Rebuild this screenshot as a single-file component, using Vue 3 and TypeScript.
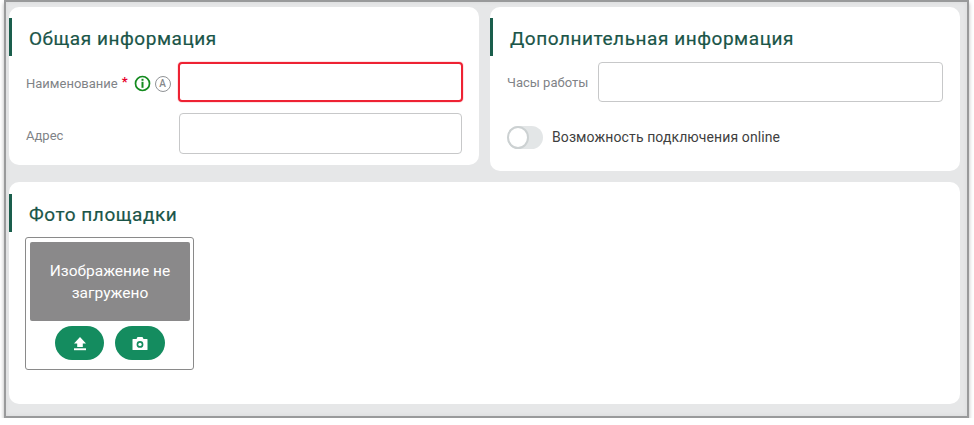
<script setup lang="ts">
</script>

<template>
  <div class="frame">
    <div class="top">
      <section class="card left">
        <h2 class="title">Общая информация</h2>
        <div class="row first">
          <div class="label wide">
            <span>Наименование</span><span class="req">*</span>
            <svg class="ic info" width="17" height="17" viewBox="0 0 17 17">
              <circle cx="8.5" cy="8.5" r="7" fill="none" stroke="#138a1e" stroke-width="1.7" />
              <rect x="7.5" y="3.8" width="2" height="2" fill="#138a1e" />
              <rect x="7.5" y="6.8" width="2" height="6" fill="#138a1e" />
            </svg>
            <span class="auto">A</span>
          </div>
          <div class="input error"></div>
        </div>
        <div class="row second">
          <div class="label wide">Адрес</div>
          <div class="input tall"></div>
        </div>
      </section>
      <section class="card right">
        <h2 class="title">Дополнительная информация</h2>
        <div class="row hours">
          <div class="label">Часы работы</div>
          <div class="input"></div>
        </div>
        <div class="switch-row">
          <span class="track"><span class="knob"></span></span>
          <span class="switch-label">Возможность подключения online</span>
        </div>
      </section>
    </div>
    <section class="card bottom">
      <h2 class="title">Фото площадки</h2>
      <div class="photo">
        <div class="placeholder">Изображение не загружено</div>
        <div class="buttons">
          <button class="btn up" type="button" aria-label="Загрузить">
            <svg width="14" height="15" viewBox="0 0 14 15">
              <path d="M7 1 L13 7.5 H9.8 V11 H4.2 V7.5 H1 Z" fill="#fff" />
              <rect x="1" y="12.3" width="12" height="1.9" fill="#fff" />
            </svg>
          </button>
          <button class="btn cam" type="button" aria-label="Камера">
            <svg width="16" height="15" viewBox="0 0 16 15">
              <path fill="#fff" fill-rule="evenodd" d="M1 3 H4.5 L5.5 1 H10.5 L11.5 3 H15 Q15.5 3 15.5 3.5 V13.5 Q15.5 14 15 14 H1 Q0.5 14 0.5 13.5 V3.5 Q0.5 3 1 3 Z M8 5 A3.4 3.4 0 1 0 8 11.8 A3.4 3.4 0 1 0 8 5 Z" />
              <circle cx="8" cy="8.4" r="1.7" fill="#fff" />
            </svg>
          </button>
        </div>
      </div>
    </section>
  </div>
</template>

<style>
html, body { background: #fff; }
</style>

<style scoped>
.frame {
  box-sizing: border-box;
  width: 965px;
  height: 418px;
  margin-left: 4px;
  border: 2px solid #999a9b;
  background: #e6e7e8;
  padding: 5px 7px 0 3px;
  box-shadow: 0 3px 4px rgba(0, 0, 0, 0.3), inset 0 0 5px rgba(0, 0, 0, 0.06);
  font-family: Roboto, "Liberation Sans", sans-serif;
}
.top {
  display: grid;
  grid-template-columns: 470px 470px;
  column-gap: 11px;
  align-items: start;
}
.card {
  background: #fff;
  border-radius: 10px;
  box-sizing: border-box;
  padding-top: 11px;
}
.left { height: 158px; }
.right { height: 164px; }
.bottom { height: 222px; margin-top: 11px; padding-top: 12px; }
.title {
  margin: 0;
  height: 38px;
  border-left: 3px solid #1a5e4c;
  padding-left: 17px;
  font-size: 19px;
  font-weight: 400;
  line-height: 41px;
  letter-spacing: 0.55px;
  color: #1a5548;
  -webkit-text-stroke: 0.2px #1a5548;
}
.row { display: flex; align-items: center; }
.first { margin-top: 6px; padding-left: 17px; }
.second { margin-top: 11px; padding-left: 17px; }
.hours { margin-top: 6px; padding-left: 17px; }
.label {
  font-size: 13px;
  color: #7f8387;
  width: 91px;
  flex: none;
  display: flex;
  align-items: center;
  padding-top: 3px;
  box-sizing: border-box;
}
.hours .label { padding-top: 1px; }
.label.wide { width: 153px; }
.req { color: #e8002a; margin-left: 4px; font-size: 13px; font-weight: 700; position: relative; top: -2px; }
.ic.info { margin-left: 6px; }
.auto {
  box-sizing: border-box;
  width: 16px;
  height: 16px;
  margin-left: 4px;
  border: 1.4px solid #909396;
  border-radius: 50%;
  color: #85888b;
  font-size: 10px;
  font-weight: 500;
  line-height: 13px;
  text-align: center;
}
.input {
  box-sizing: border-box;
  height: 40px;
  border: 1px solid #c7c8c9;
  border-radius: 4px;
  background: #fff;
}
.left .input { width: 283px; }
.right .input { width: 345px; }
.left .input.tall { height: 41px; }
.input.error {
  border: 2px solid #ee2233;
  border-radius: 4px;
  width: 285px !important;
  margin-left: -1px;
  box-shadow: 0 0 0 1px rgba(238, 34, 51, 0.12);
}
.switch-row { display: flex; align-items: center; margin-top: 24px; padding-left: 17px; }
.track {
  display: block;
  width: 36px;
  height: 23px;
  border-radius: 12px;
  background: #e3e6e7;
  position: relative;
  flex: none;
}
.knob {
  position: absolute;
  left: 0;
  top: 0;
  box-sizing: border-box;
  width: 22px;
  height: 23px;
  border-radius: 50%;
  background: #fff;
  border: 2px solid #ccd1d2;
}
.switch-label { margin-left: 9px; font-size: 14px; letter-spacing: 0.1px; color: #3f3f3f; position: relative; top: -1px; }
.photo {
  box-sizing: border-box;
  width: 169px;
  height: 133px;
  margin: 5px 0 0 16px;
  border: 1px solid #8a8a8a;
  border-radius: 3px;
  padding: 4px;
}
.placeholder {
  box-sizing: border-box;
  width: 160px;
  height: 79px;
  background: #8a898a;
  border-radius: 2px;
  color: #fff;
  font-size: 15.5px;
  line-height: 22px;
  padding: 0 12px;
  text-align: center;
  display: flex;
  align-items: center;
  justify-content: center;
}
.buttons { display: flex; justify-content: center; gap: 11px; margin-top: 5px; width: 160px; }
.btn {
  height: 34px;
  border: 0;
  padding: 0;
  border-radius: 17px;
  background: #148c5f;
  display: flex;
  align-items: center;
  justify-content: center;
}
.up { width: 49px; }
.cam { width: 50px; }
</style>
